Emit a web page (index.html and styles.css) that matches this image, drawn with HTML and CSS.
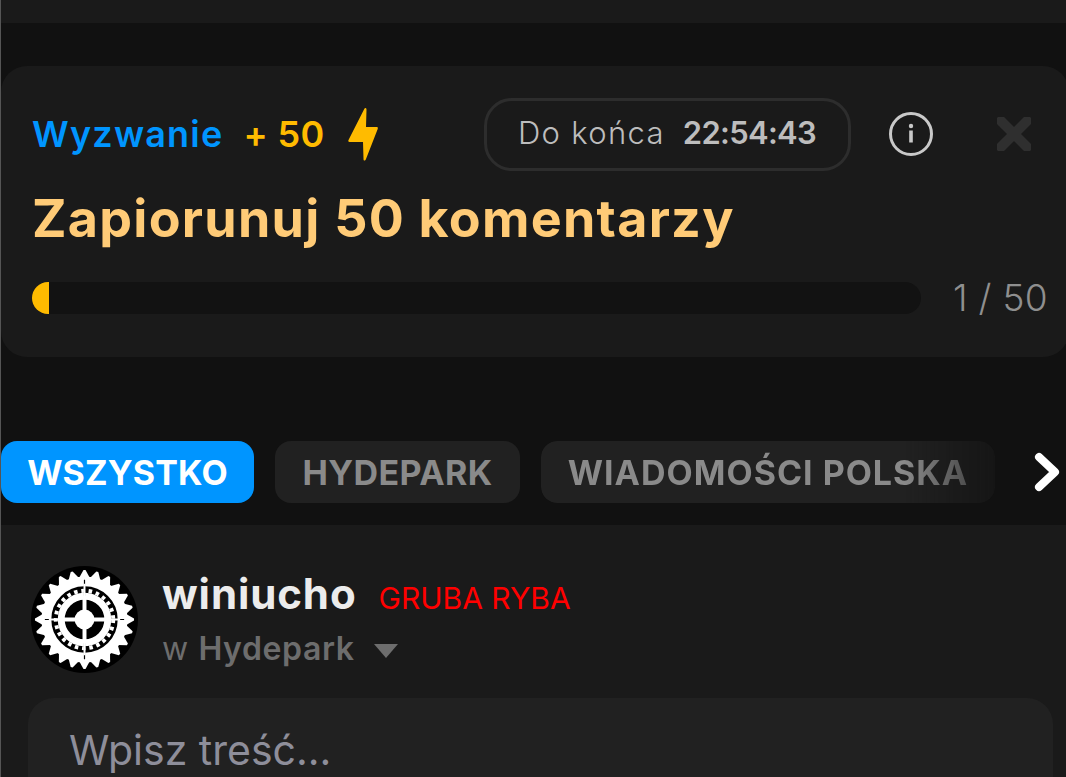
FILE: index.html
```html
<!DOCTYPE html>
<html lang="pl">
<head>
  <meta charset="UTF-8">
  <title>Wyzwanie</title>
  <link rel="stylesheet" href="styles.css">
</head>
<body>
  <div class="topbar"></div>

  <section class="challenge">
    <div class="challenge-head">
      <span class="challenge-label">Wyzwanie</span>
      <span class="challenge-points">+ 50</span>
      <svg class="bolt" viewBox="0 0 30 54" aria-hidden="true">
        <path d="M16.5 1.5 C17.5 0.5 18.5 1 18.5 2.5 L18 20 L29 20 C30 20 30 21 29.7 22 L18 52 C17.2 54 15.5 54 15.5 52 L15 35 L1.5 35 C0.5 35 0 34 0.5 33 Z"/>
      </svg>
      <div class="timer">
        <span>Do końca</span>
        <strong>22:54:43</strong>
      </div>
      <svg class="info" viewBox="0 0 44 44" aria-hidden="true">
        <circle class="info-ring" cx="22" cy="22" r="20.5"/>
        <circle class="info-dot" cx="22" cy="14" r="2.2"/>
        <rect class="info-dot" x="20.2" y="18.5" width="3.6" height="12"/>
      </svg>
      <svg class="close" viewBox="0 0 34 34" aria-hidden="true">
        <path d="M4 4 L30 30 M30 4 L4 30"/>
      </svg>
    </div>
    <h2 class="challenge-title">Zapiorunuj 50 komentarzy</h2>
    <div class="progress-row">
      <div class="progress">
        <div class="progress-fill"></div>
      </div>
      <span class="progress-count">1 / 50</span>
    </div>
  </section>

  <nav class="tabs">
    <a class="tab tab-active">WSZYSTKO</a>
    <a class="tab tab-park">HYDEPARK</a>
    <a class="tab tab-fade">WIADOMOŚCI POLSKA</a>
    <svg class="tabs-next" viewBox="0 0 26 40" aria-hidden="true">
      <path d="M5 5 L21 20 L5 35"/>
    </svg>
  </nav>

  <section class="composer">
    <div class="author">
      <svg class="avatar" viewBox="0 0 108 108" aria-hidden="true">
        <defs>
          <path id="tooth" d="M48.5 12 L53 4 H55 L59.5 12 Z"/>
          <g id="teeth6">
            <use href="#tooth"/>
            <use href="#tooth" transform="rotate(15 54 54)"/>
            <use href="#tooth" transform="rotate(30 54 54)"/>
            <use href="#tooth" transform="rotate(45 54 54)"/>
            <use href="#tooth" transform="rotate(60 54 54)"/>
            <use href="#tooth" transform="rotate(75 54 54)"/>
          </g>
        </defs>
        <circle cx="54" cy="54" r="54" fill="#000"/>
        <g fill="#fff">
          <use href="#teeth6"/>
          <use href="#teeth6" transform="rotate(90 54 54)"/>
          <use href="#teeth6" transform="rotate(180 54 54)"/>
          <use href="#teeth6" transform="rotate(270 54 54)"/>
        </g>
        <circle cx="54" cy="54" r="38.5" fill="none" stroke="#fff" stroke-width="10"/>
        <circle cx="54" cy="54" r="29" fill="none" stroke="#fff" stroke-width="4" stroke-dasharray="3.6 3.8"/>
        <circle cx="54" cy="54" r="23.5" fill="none" stroke="#fff" stroke-width="7"/>
        <path d="M54 14 V94 M14 54 H94" stroke="#000" stroke-width="1.2"/>
        <path d="M54 18 V90 M18 54 H90" stroke="#fff" stroke-width="2"/>
        <path d="M54 30 V78 M30 54 H78" stroke="#fff" stroke-width="4"/>
        <circle cx="54" cy="54" r="10" fill="#fff"/>
      </svg>
      <div class="author-info">
        <div class="author-line">
          <span class="author-name">winiucho</span>
          <span class="author-rank">GRUBA RYBA</span>
        </div>
        <div class="author-target">
          <span>w <b>Hydepark</b></span>
          <i class="caret"></i>
        </div>
      </div>
    </div>
    <div class="editor">Wpisz treść...</div>
  </section>
</body>
</html>
```

FILE: styles.css
```css
html, body {
  margin: 0;
  height: 777px;
  overflow: hidden;
}
body {
  font-family: Inter, "Noto Sans", sans-serif;
  background: #111;
  border-left: 1px solid #555;
}
.topbar {
  height: 23px;
  background: #1a1a1a;
}

/* wyzwanie */
.challenge {
  box-sizing: border-box;
  height: 291px;
  margin: 43px -3px 0 0;
  padding: 32px 19px 0 31px;
  background: #1a1a1a;
  border-radius: 26px;
}
.challenge-head {
  display: flex;
  align-items: center;
  height: 72px;
  margin-right: 19px;
}
.challenge-label {
  font-size: 36px;
  font-weight: 600;
  color: #0095ff;
  letter-spacing: 1.2px;
}
.challenge-points {
  margin-left: 20px;
  font-size: 36px;
  font-weight: 600;
  letter-spacing: 0.4px;
  color: #ffbb00;
}
.bolt {
  width: 30px;
  height: 54px;
  margin-left: 23px;
  fill: #ffbb00;
}
.timer {
  box-sizing: border-box;
  display: flex;
  align-items: center;
  gap: 18px;
  width: 367px;
  height: 73px;
  margin-left: auto;
  padding: 0 0 4px 31px;
  border: 3px solid #2d2d2d;
  border-radius: 28px;
  font-size: 31px;
  font-weight: 300;
  letter-spacing: 1.3px;
  color: #bdbdbd;
}
.timer strong {
  font-weight: 600;
  letter-spacing: -0.7px;
}
.info {
  width: 44px;
  height: 44px;
  margin-left: 38px;
}
.info-ring {
  fill: none;
  stroke: #c9c9c9;
  stroke-width: 3;
}
.info-dot {
  fill: #c9c9c9;
}
.close {
  width: 34px;
  height: 34px;
  margin-left: 64px;
  fill: none;
  stroke: #2f2f2f;
  stroke-width: 10;
  stroke-linecap: round;
}
.challenge-title {
  margin: 15px 0 0;
  font-size: 52px;
  line-height: 68px;
  font-weight: 700;
  letter-spacing: 1.27px;
  color: #ffcb77;
}
.progress-row {
  display: flex;
  align-items: center;
  margin-top: 22px;
}
.progress {
  width: 889px;
  height: 32px;
  background: #121212;
  border-radius: 16px;
  overflow: hidden;
}
.progress-fill {
  width: 17px;
  height: 100%;
  background: #ffbb00;
}
.progress-count {
  margin-left: 32px;
  font-size: 37px;
  font-weight: 300;
  letter-spacing: 0.3px;
  color: #8f8f8f;
}

/* zakladki */
.tabs {
  display: flex;
  align-items: center;
  gap: 21px;
  height: 62px;
  margin-top: 84px;
}
.tab {
  box-sizing: border-box;
  display: flex;
  align-items: center;
  justify-content: center;
  height: 62px;
  padding-top: 1px;
  background: #212121;
  border-radius: 16px;
  font-size: 34px;
  font-weight: 700;
  color: #8a8a8a;
  white-space: nowrap;
}
.tab-active {
  width: 253px;
  background: #0095ff;
  color: #fff;
  letter-spacing: 0.2px;
}
.tab-park {
  width: 245px;
  letter-spacing: 0.4px;
}
.tab-fade {
  width: 454px;
  letter-spacing: 1px;
  -webkit-mask-image: linear-gradient(to right, #000 80%, rgba(0, 0, 0, 0.3) 100%);
  mask-image: linear-gradient(to right, #000 80%, rgba(0, 0, 0, 0.3) 100%);
}
.tabs-next {
  width: 26px;
  height: 40px;
  margin-left: 18px;
  fill: none;
  stroke: #fff;
  stroke-width: 8;
  stroke-linecap: round;
  stroke-linejoin: round;
}

/* pole komentarza */
.composer {
  box-sizing: border-box;
  height: 252px;
  margin-top: 22px;
  padding: 41px 13px 0 27px;
  background: #1a1a1a;
  overflow: hidden;
}
.author {
  display: flex;
  align-items: flex-start;
  height: 108px;
}
.avatar {
  width: 107px;
  height: 107px;
  margin-left: 3px;
  flex: none;
}
.author-info {
  margin-left: 24px;
}
.author-line {
  display: flex;
  align-items: baseline;
  gap: 22px;
  height: 56px;
  line-height: 56px;
}
.author-name {
  font-size: 42px;
  font-weight: 700;
  letter-spacing: 0.9px;
  color: #ececec;
}
.author-rank {
  font-size: 30px;
  color: #f00;
}
.author-target {
  display: flex;
  align-items: center;
  gap: 19px;
  margin-top: 7px;
  font-size: 32px;
  letter-spacing: 0.6px;
  color: #6d6d6d;
}
.author-target b {
  font-weight: 600;
}
.caret {
  width: 0;
  height: 0;
  margin-top: 4px;
  border-left: 12px solid transparent;
  border-right: 12px solid transparent;
  border-top: 14px solid #6d6d6d;
}
.editor {
  box-sizing: border-box;
  height: 120px;
  margin-top: 24px;
  padding: 27px 41px;
  background: #212121;
  border-radius: 26px;
  font-size: 41px;
  color: #8e8e9a;
}
```
